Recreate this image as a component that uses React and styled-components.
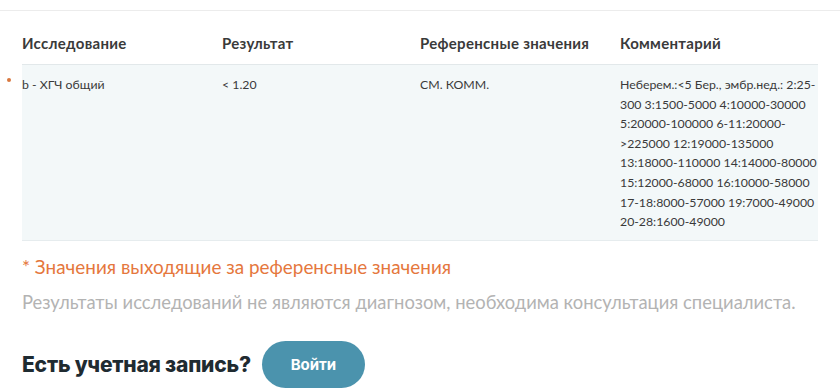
import React from "react";
import styled, { createGlobalStyle } from "styled-components";

const Global = createGlobalStyle`
  html, body { margin: 0; padding: 0; background: #fff; }
  body { font-family: "Lato", "Noto Sans", sans-serif; color: #333; }
`;

const Page = styled.div`
  width: 840px;
  height: 388px;
  overflow: hidden;
  box-sizing: border-box;
  border-top: 1px solid #ececec;
  margin-top: 10px;
`;

const Content = styled.div`
  padding: 0 22px;
`;

const Table = styled.div`
  margin-top: 22px;
  display: grid;
  grid-template-columns: 200px 198px 200px 1fr;
`;

const HeadCell = styled.div`
  font-size: 15px;
  font-weight: 700;
  color: #3a3a3a;
  letter-spacing: 0.3px;
  height: 31px;
  line-height: 20px;
  border-bottom: 1px solid #e2e8ea;
`;

const Cell = styled.div`
  position: relative;
  background: #f3f8f9;
  font-size: 12.3px;
  color: #3a3a3a;
  line-height: 19.6px;
  padding: 10px 0 8px;
  border-bottom: 1px solid #e6ecee;
`;

const Marker = styled.span`
  position: absolute;
  left: -15px;
  top: 13px;
  width: 4px;
  height: 4px;
  border-radius: 50%;
  background: #d9783f;
`;

const Line = styled.span`
  display: block;
  white-space: nowrap;
`;

const Note = styled.div`
  margin-top: 14px;
  font-size: 18.9px;
  color: #e5773d;
`;

const Disclaimer = styled.div`
  margin-top: 13px;
  font-size: 18.4px;
  color: #b3b3b3;
`;

const LoginRow = styled.div`
  margin-top: 28px;
  display: flex;
  align-items: center;
  gap: 11px;
`;

const LoginTitle = styled.div`
  font-family: "Inter", "Lato", sans-serif;
  font-weight: 800;
  font-size: 21px;
  color: #1f2b31;
  letter-spacing: -0.2px;
`;

const LoginButton = styled.button`
  border: none;
  background: #4b93ad;
  color: #fff;
  font-family: "Inter", "Lato", sans-serif;
  font-weight: 700;
  font-size: 15px;
  width: 103px;
  height: 47px;
  border-radius: 24px;
  cursor: pointer;
`;

const comment = [
  "Неберем.:<5 Бер., эмбр.нед.: 2:25-",
  "300 3:1500-5000 4:10000-30000",
  "5:20000-100000 6-11:20000-",
  ">225000 12:19000-135000",
  "13:18000-110000 14:14000-80000",
  "15:12000-68000 16:10000-58000",
  "17-18:8000-57000 19:7000-49000",
  "20-28:1600-49000",
];

export default function App() {
  return (
    <>
      <Global />
      <Page>
        <Content>
          <Table>
            <HeadCell>Исследование</HeadCell>
            <HeadCell>Результат</HeadCell>
            <HeadCell>Референсные значения</HeadCell>
            <HeadCell>Комментарий</HeadCell>
            <Cell>
              <Marker />
              b - ХГЧ общий
            </Cell>
            <Cell>&lt; 1.20</Cell>
            <Cell>СМ. КОММ.</Cell>
            <Cell>
              {comment.map((l) => (
                <Line key={l}>{l}</Line>
              ))}
            </Cell>
          </Table>
          <Note>* Значения выходящие за референсные значения</Note>
          <Disclaimer>
            Результаты исследований не являются диагнозом, необходима консультация специалиста.
          </Disclaimer>
          <LoginRow>
            <LoginTitle>Есть учетная запись?</LoginTitle>
            <LoginButton>Войти</LoginButton>
          </LoginRow>
        </Content>
      </Page>
    </>
  );
}
